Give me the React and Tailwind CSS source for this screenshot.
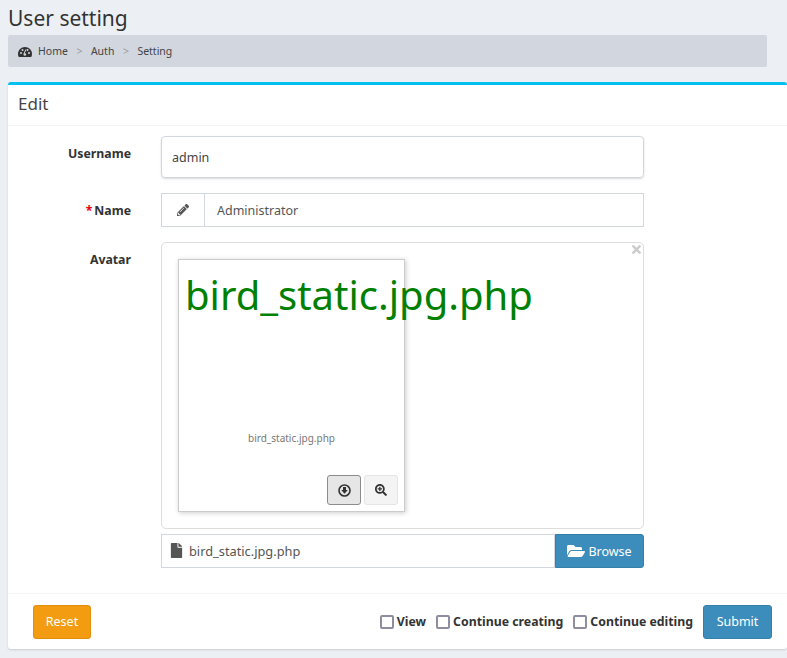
import React from "react";
import { FaPencilAlt, FaTimes, FaSearchPlus, FaFile, FaFolderOpen } from "react-icons/fa";

const Dashboard = () => (
  <svg width="14" height="12" viewBox="0 0 14 12" className="mr-[6px] text-[#333]">
    <path
      fill="currentColor"
      d="M7 1C3.1 1 0 4.1 0 8c0 1.2.3 2.300.8 3h12.400c.5-.7.8-1.800.8-3 0-3.900-3.100-7-7-7z"
    />
    <circle cx="3" cy="7" r="1" fill="#d2d6de" />
    <circle cx="4.500" cy="4" r="1" fill="#d2d6de" />
    <circle cx="9.500" cy="4" r="1" fill="#d2d6de" />
    <circle cx="11" cy="7" r="1" fill="#d2d6de" />
    <path d="M7.800 3.500 6 8" stroke="#d2d6de" strokeWidth="1" />
    <circle cx="6.800" cy="8.500" r="1.300" fill="#d2d6de" />
  </svg>
);

const DownloadIcon = () => (
  <svg width="13" height="13" viewBox="0 0 13 13">
    <circle cx="6.500" cy="6.500" r="5.500" fill="none" stroke="#333" strokeWidth="1.600" />
    <path fill="#333" d="M5 3h3v3h1.800L6.500 9.800 3.200 6H5z" />
  </svg>
);

const Check = ({ label }) => (
  <label className="flex items-center gap-[3px] text-[12.3px] font-bold text-[#333]">
    <span className="w-[14px] h-[14px] rounded-[2px] border-2 border-[#8e8ea0] bg-white" />
    {label}
  </label>
);

const App = () => {
  return (
    <div className="min-h-[658px] bg-[#ecf0f5] pl-2 overflow-hidden font-['Noto_Sans',sans-serif] text-[#333]">
      <h1 className="h-[35px] text-[21px] leading-[36px] text-[#333]">User setting</h1>

      <div className="mr-5 h-8 flex items-center pl-[10px] pt-[1px] bg-[#d2d6de] rounded-[2px] text-[10.5px] text-[#444]">
        <Dashboard />
        <span>Home</span>
        <span className="mx-[8.5px] text-[#999]">&gt;</span>
        <span>Auth</span>
        <span className="mx-[8.5px] text-[#999]">&gt;</span>
        <span>Setting</span>
      </div>

      <div className="mt-[15px] h-[567px] bg-white rounded-[3px] border-t-[3px] border-[#00c0ef] shadow-[0_1px_2px_rgba(0,0,0,0.15)]">
        <div className="h-[41px] flex items-center pl-[10px] pb-[3px] border-b border-[#f4f4f4] text-[17px] text-[#444]">Edit</div>

        <div className="pt-[10px] pb-[25px] flex flex-col gap-[15px]">
          <div className="flex">
            <div className="w-[123px] pt-[9px] text-right text-[12.3px] font-bold">Username</div>
            <div className="ml-[30px] w-[483px] h-[42px] flex items-center pl-[10px] pt-[2px] border border-[#d2d6de] rounded-[4px] shadow-[0_1px_2px_rgba(0,0,0,0.15)] text-[12.5px] text-[#444]">
              admin
            </div>
          </div>

          <div className="flex">
            <div className="w-[123px] pt-[9px] text-right text-[12.3px] font-bold">
              <span className="text-red-600 mr-[2px]">*</span>Name
            </div>
            <div className="ml-[30px] w-[483px] h-[34px] flex border border-[#d2d6de] text-[12.5px] text-[#555]">
              <div className="w-[43px] flex items-center justify-center border-r border-[#d2d6de]">
                <FaPencilAlt className="text-[12px] text-[#555]" />
              </div>
              <div className="flex items-center pl-3 pt-[2px]">Administrator</div>
            </div>
          </div>

          <div className="flex">
            <div className="w-[123px] pt-[9px] text-right text-[12.3px] font-bold">Avatar</div>
            <div className="ml-[30px] w-[483px] flex flex-col gap-[5px]">
              <div className="relative h-[287px] border border-[#ddd] rounded-[5px] pt-4 pl-4">
                <FaTimes className="absolute top-0 right-0 text-[13px] text-[#ccc]" />
                <div className="w-[227px] h-[253px] flex flex-col border border-[#ccc] shadow-[1px_1px_5px_0_rgba(0,0,0,0.2)]">
                  <div className="h-[70px] pl-[6px] text-[40px] leading-[70px] text-[#008000] whitespace-nowrap">
                    bird_static.jpg.php
                  </div>
                  <div className="mt-[101px] text-center text-[10px] text-[#777]">bird_static.jpg.php</div>
                  <div className="mt-auto mb-[6px] mr-[6px] flex justify-end gap-[3px]">
                    <div className="w-[34px] h-[30px] flex items-center justify-center rounded-[3px] border border-[#8c8c8c] bg-[#e6e6e6]">
                      <DownloadIcon />
                    </div>
                    <div className="w-[34px] h-[30px] flex items-center justify-center rounded-[3px] border border-[#e5e5e5] bg-[#f4f4f4] text-[#333]">
                      <FaSearchPlus className="text-[12px]" />
                    </div>
                  </div>
                </div>
              </div>

              <div className="flex h-[34px] text-[12.8px]">
                <div className="flex-1 flex items-center pl-[7px] pt-[1px] border border-[#d2d6de] text-[#555]">
                  <FaFile className="text-[15px] mr-[5px] mb-[3px]" />
                  bird_static.jpg.php
                </div>
                <div className="w-[89px] flex items-center justify-center gap-[3px] pt-[2px] bg-[#3c8dbc] border border-[#367fa9] rounded-r-[3px] text-[12.5px] text-white">
                  <FaFolderOpen className="text-[18px] mb-[2px]" />
                  Browse
                </div>
              </div>
            </div>
          </div>
        </div>

        <div className="border-t border-[#f4f4f4] h-[56px] pt-[11px] pl-[25px] pr-[15px] flex items-start">
          <button className="w-[58px] h-[34px] bg-[#f39c12] border border-[#e08e0b] rounded-[3px] text-[12.5px] text-white">Reset</button>
          <div className="ml-auto h-[34px] flex items-center gap-[10px]">
            <Check label="View" />
            <Check label="Continue creating" />
            <Check label="Continue editing" />
            <button className="w-[69px] h-[34px] bg-[#3c8dbc] border border-[#367fa9] rounded-[3px] text-[12.5px] text-white">Submit</button>
          </div>
        </div>
      </div>
    </div>
  );
};

export default App;
